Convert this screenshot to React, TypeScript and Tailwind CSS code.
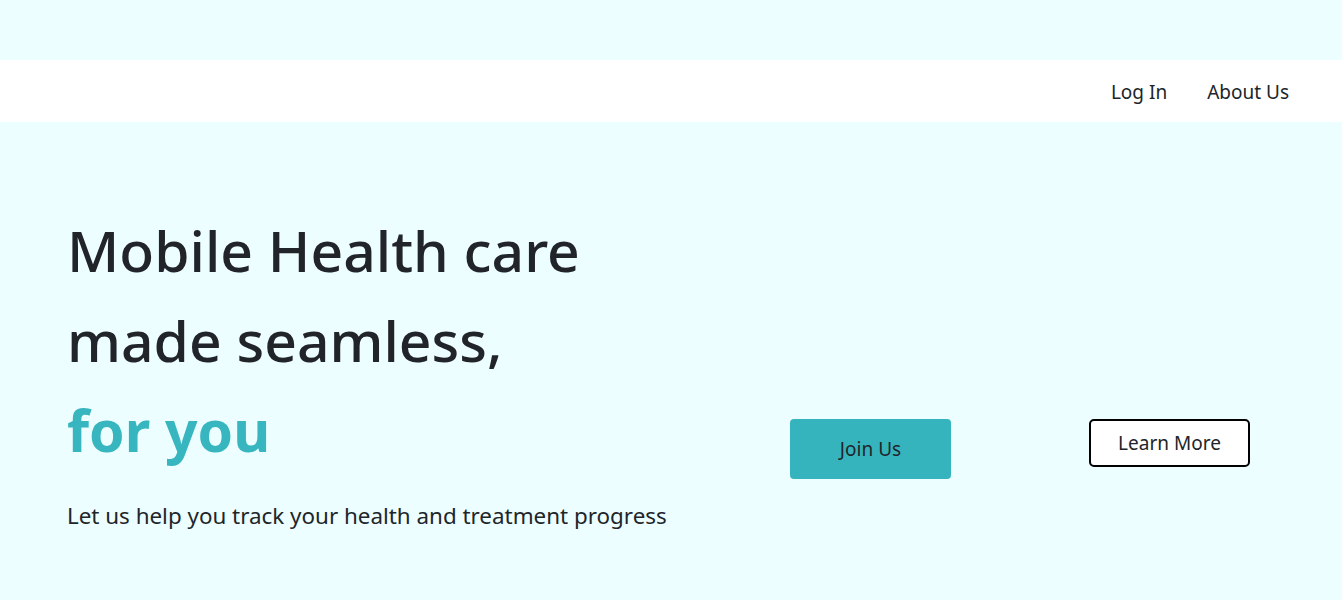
export default function App() {
  return (
    <div className="min-h-[600px] bg-[#ecfeff] text-[#212529]" style={{ fontFamily: '"Noto Sans", "Open Sans", sans-serif' }}>
      <div className="h-[60px]" />
      <nav className="flex h-[62px] items-center justify-end gap-[40px] bg-white pr-[53px] pt-[2px] text-[19px]">
        <a className="cursor-pointer">Log In</a>
        <a className="cursor-pointer">About Us</a>
      </nav>
      <section className="flex pl-[67px] pt-[83px]">
        <div className="w-[723px]">
          <h1 className="text-[57px] leading-[90px] font-medium">
            Mobile Health care
            <br />
            made seamless,
            <br />
            <span className="font-bold text-[#38b6bf]">for you</span>
          </h1>
          <p className="mt-[24px] text-[22.4px]">Let us help you track your health and treatment progress</p>
        </div>
        <div className="mt-[214px] flex items-start">
          <button className="h-[60px] w-[161px] rounded-[4px] bg-[#36b4bd] text-[19px] text-[#212529]">Join Us</button>
          <button className="ml-[138px] h-[48px] w-[161px] rounded-[5px] border-2 border-black bg-white text-[19px] text-[#212529]">Learn More</button>
        </div>
      </section>
    </div>
  );
}
